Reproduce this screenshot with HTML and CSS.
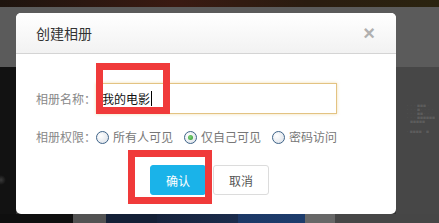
FILE: index.html
```html
<!DOCTYPE html>
<html lang="zh-CN">
<head>
    <meta charset="UTF-8">
    <title>创建相册</title>
    <link rel="stylesheet" href="styles.css">
</head>
<body>
    <!-- Page behind the overlay -->
    <div class="page">
        <div class="page-top"></div>
        <div class="page-band"></div>
        <div class="page-main">
            <div class="side-left"><span class="blob"></span></div>
            <div class="page-center"></div>
            <div class="side-right">
                <p>· · · ■■■ ·</p>
                <p>· · · ■· · · ·</p>
                <p>· · · ■■· · ·</p>
                <p>· · · ■■■■■■</p>
                <p>&nbsp; &nbsp; &nbsp; ■■■■■</p>
                <p class="gap">· ■■■■ · ■</p>
            </div>
        </div>
        <div class="page-bottom">
            <span class="seg s1"></span>
            <span class="seg s2"></span>
            <span class="seg s3"></span>
            <span class="seg s4"></span>
            <span class="seg s5"></span>
            <span class="seg s6"></span>
            <span class="seg s7"></span>
        </div>
    </div>

    <!-- Dialog -->
    <div class="modal">
        <div class="modal-header">
            <h3>创建相册</h3>
            <span class="close">×</span>
        </div>
        <div class="modal-body">
            <div class="form-row">
                <label class="form-label">相册名称：</label>
                <div class="input">我的电影<span class="caret"></span></div>
            </div>
            <div class="form-row radios">
                <label class="form-label">相册权限：</label>
                <span class="radio"></span><span class="radio-text">所有人可见</span>
                <span class="radio checked"></span><span class="radio-text">仅自己可见</span>
                <span class="radio"></span><span class="radio-text">密码访问</span>
            </div>
            <div class="actions">
                <button class="btn btn-primary">确认</button>
                <button class="btn">取消</button>
            </div>
        </div>
    </div>

    <!-- Red annotation boxes -->
    <div class="mark mark-name"></div>
    <div class="mark mark-ok"></div>
</body>
</html>
```

FILE: styles.css
```css
/* General */
html, body {
    margin: 0;
    padding: 0;
}
body {
    width: 439px;
    height: 223px;
    overflow: hidden;
    position: relative;
    font-family: "Noto Sans CJK SC", "Liberation Sans", sans-serif;
}

/* Backdrop page */
.page {
    height: 223px;
    display: flex;
    flex-direction: column;
}
.page-top {
    height: 7px;
    background: linear-gradient(90deg, #1e140e, #3a1a12 40%, #2a1c10 70%, #2b2410);
}
.page-band {
    height: 60px;
    background-color: #5b5b5b;
}
.page-main {
    height: 147px;
    display: flex;
}
.side-left {
    width: 16px;
    background-color: #121212;
    position: relative;
}
.blob {
    position: absolute;
    left: -4px;
    top: 108px;
    width: 10px;
    height: 10px;
    border-radius: 50%;
    background: radial-gradient(#3a3a3a, rgba(18, 18, 18, 0) 70%);
}
.page-center {
    flex: 1;
    background-color: #333;
}
.side-right {
    width: 43px;
    background-color: #474747;
    padding: 37px 0 0 10px;
    box-sizing: border-box;
}
.side-right p {
    margin: 0;
    font-size: 3px;
    line-height: 4px;
    color: #5c5c5c;
    white-space: nowrap;
}
.side-right p.gap {
    margin-top: 6px;
}
.page-bottom {
    height: 9px;
    display: flex;
}
.seg { display: block; height: 100%; }
.s1 { width: 73px; background-color: #0f0f0f; }
.s2 { width: 33px; background-color: #525252; }
.s3 { width: 51px; background-color: #142036; }
.s4 { width: 81px; background: linear-gradient(90deg, #16233c, #1b2c4c); }
.s5 { width: 67px; background: linear-gradient(90deg, #1c3866, #1d3c6c); }
.s6 { width: 30px; background-color: #676767; }
.s7 { flex: 1; background-color: #464646; }

/* Dialog */
.modal {
    position: absolute;
    left: 16px;
    top: 13px;
    width: 380px;
    height: 201px;
    background-color: #fff;
    border-radius: 5px;
    overflow: hidden;
}
.modal-header {
    height: 41px;
    box-sizing: border-box;
    border-bottom: 1px solid #d4d4d4;
    background: linear-gradient(#fff, #f2f2f2);
    display: flex;
    align-items: center;
    justify-content: space-between;
    padding: 0 21px 0 20px;
}
.modal-header h3 {
    margin: 0;
    font-size: 14px;
    font-weight: normal;
    color: #333;
}
.close {
    font-family: "Liberation Sans", sans-serif;
    font-size: 20px;
    font-weight: bold;
    line-height: 1;
    color: #b0b0b0;
}
.modal-body {
    padding: 29px 0 0 20px;
}
.form-row {
    display: flex;
    align-items: center;
}
.form-label {
    width: 60px;
    font-size: 12px;
    color: #888;
    line-height: 16px;
}
.input {
    width: 241px;
    height: 31px;
    box-sizing: border-box;
    border: 1px solid #e3c382;
    box-shadow: 0 0 3px rgba(232, 196, 120, 0.6);
    padding: 0 0 0 5px;
    font-size: 12px;
    line-height: 29px;
    color: #111;
    display: flex;
    align-items: center;
}
.caret {
    display: inline-block;
    width: 1px;
    height: 15px;
    margin-left: 1px;
    background-color: #000;
}

/* Radios */
.radios {
    margin-top: 13px;
    height: 20px;
}
.radio {
    width: 13px;
    height: 13px;
    box-sizing: border-box;
    border: 1px solid #3e6388;
    border-radius: 50%;
    background: radial-gradient(circle at 35% 35%, #fff, #d8dee6);
    margin-right: 4px;
    position: relative;
}
.radio.checked::after {
    content: "";
    position: absolute;
    left: 3px;
    top: 3px;
    width: 5px;
    height: 5px;
    border-radius: 50%;
    background: radial-gradient(circle at 40% 40%, #7fd27a, #2d9a2d);
}
.radio-text {
    font-size: 12px;
    color: #777;
    line-height: 16px;
    margin-right: 11px;
}

/* Buttons */
.actions {
    display: flex;
    gap: 7px;
    padding-left: 114px;
    margin-top: 18px;
}
.btn {
    width: 56px;
    height: 30px;
    font-family: inherit;
    font-size: 12px;
    color: #555;
    background-color: #fff;
    border: 1px solid #dcdcdc;
    border-radius: 3px;
    padding: 0;
}
.btn-primary {
    color: #fff;
    background-color: #1ab3e9;
    border-color: #1ab3e9;
}

/* Red annotation boxes */
.mark {
    position: absolute;
    border: 7px solid #f03a3a;
    box-sizing: border-box;
}
.mark-name {
    left: 96px;
    top: 63px;
    width: 74px;
    height: 51px;
}
.mark-ok {
    left: 128px;
    top: 150px;
    width: 84px;
    height: 54px;
}
```
